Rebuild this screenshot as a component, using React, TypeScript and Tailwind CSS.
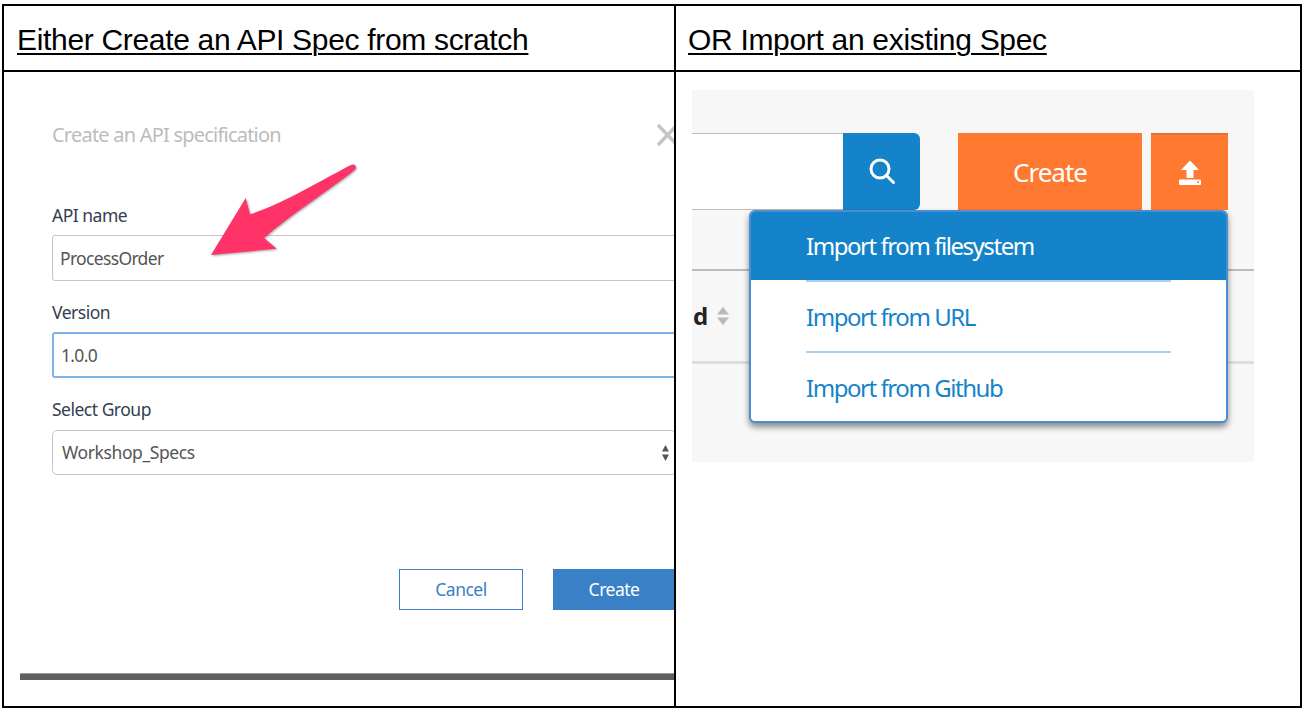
import React from "react";

const ui = { fontFamily: '"Noto Sans", "Open Sans", sans-serif' };
const head = { fontFamily: '"Liberation Sans", Arial, sans-serif' };

function Label({ children, className }: { children: React.ReactNode; className: string }) {
  return (
    <div className={`h-[24px] leading-[24px] text-[17.5px] tracking-[-0.5px] text-[#33404f] ${className}`}>{children}</div>
  );
}

export default function App() {
  return (
    <div className="w-[1304px] h-[710px] bg-white pt-[4px] pl-[2px] overflow-hidden">
      <div className="w-[1300px] h-[704px] border-2 border-black flex flex-col">
        <div className="h-[66px] shrink-0 flex border-b-2 border-black">
          <div
            style={head}
            className="w-[672px] border-r-2 border-black pl-[13px] pt-[16px] text-[30px] leading-[36px] tracking-[-0.32px] text-black underline underline-offset-[3px] decoration-2"
          >
            Either Create an API Spec from scratch
          </div>
          <div
            style={head}
            className="flex-1 pl-[12px] pt-[16px] text-[30px] leading-[36px] tracking-[-0.31px] text-black underline underline-offset-[3px] decoration-2"
          >
            OR Import an existing Spec
          </div>
        </div>
        <div className="flex flex-1 min-h-0">
          {/* Left panel */}
          <div style={ui} className="w-[672px] border-r-2 border-black relative overflow-hidden">
            <div className="pl-[48px] pt-[51px] flex flex-col items-start">
              <div className="h-[24px] w-[660px] flex items-center">
                <span className="w-[229px] shrink-0 whitespace-nowrap text-[20px] tracking-[-0.78px] text-[#bcbcbc] leading-[24px]">Create an API specification</span>
                <svg className="ml-[374px] shrink-0" width="24" height="24" viewBox="0 0 24 24">
                  <path d="M3 2 L22 22 M22 2 L3 22" stroke="#c4c4c4" strokeWidth="3.4" />
                </svg>
              </div>
              <Label className="mt-[56px]">API name</Label>
              <div className="mt-[8px] h-[46px] w-[640px] rounded-[3px] border-[1.5px] border-[#c6c6c6] pl-[7px] flex items-center text-[17.5px] tracking-[-0.67px] text-[#555]">
                ProcessOrder
              </div>
              <Label className="mt-[19px]">Version</Label>
              <div className="mt-[8px] h-[46px] w-[640px] rounded-[3px] border-2 border-[#7db3e6] pl-[7px] pt-[1px] flex items-center text-[17.5px] tracking-[-0.67px] text-[#555]">
                1.0.0
              </div>
              <Label className="mt-[19px]">Select Group</Label>
              <div className="mt-[9px] h-[45px] w-[624px] rounded-[5px] border-[1.5px] border-[#c6c6c6] pl-[9px] pr-[5px] flex items-center justify-between text-[17.5px] tracking-[-0.4px] text-[#555]">
                <span>Workshop_Specs</span>
                <svg width="9" height="18" viewBox="0 0 9 18">
                  <path d="M4.5 1 L8 7.5 H1 Z M4.5 17 L8 10.5 H1 Z" fill="#555" />
                </svg>
              </div>
              <div className="mt-[94px] ml-[347px] flex gap-[30px] h-[41px]">
                <div className="w-[124px] border-[1.5px] border-[#3a80c6] flex items-center justify-center text-[17.5px] tracking-[-0.5px] text-[#3a80c6]">
                  Cancel
                </div>
                <div className="w-[122px] bg-[#3a80c6] flex items-center justify-center text-[17.5px] tracking-[-0.5px] text-white">
                  Create
                </div>
              </div>
              <div className="mt-[63px] -ml-[32px] h-[7px] w-[680px] bg-[#5f5f5f] border-t border-[#9a9a9a]" />
            </div>
            <svg className="absolute left-0 top-0" width="400" height="220" viewBox="4 72 400 220">
              <path
                d="M211 255 L245.7 198 L250 214.3 C285 203 325 178 351 165 C355 163 357 167 355 169.5 C330 190 290 215 264 238 L276.7 248.7 Z"
                fill="#ff3368"
                style={{ filter: "drop-shadow(1px 1px 1px rgba(0,0,0,0.35))" }}
              />
            </svg>
          </div>

          {/* Right panel */}
          <div style={ui} className="flex-1 pl-[16px] pt-[18px]">
            <div className="w-[562px] h-[372px] bg-[#f7f7f7] relative pt-[43px]">
              <div className="flex h-[77px]">
                <div className="w-[151px] bg-white border-y-[1.5px] border-[#bdbdbd]" />
                <div className="w-[77px] bg-[#1583c9] rounded-r-[6px] flex items-center justify-center">
                  <svg width="28" height="28" viewBox="0 0 28 28" fill="none" stroke="#fff" strokeWidth="3" strokeLinecap="round">
                    <circle cx="12" cy="11" r="9" />
                    <path d="M18.5 17.5 L25.5 24.5" />
                  </svg>
                </div>
                <div className="ml-[38px] w-[184px] bg-[#ff7a30] pt-[2px] flex items-center justify-center text-white text-[26px] tracking-[-1px]">
                  Create
                </div>
                <div className="ml-[9px] w-[77px] bg-[#ff7a30] border-t-2 border-[#e8702e] flex items-center justify-center">
                  <svg width="24" height="26" viewBox="0 0 24 26">
                    <path d="M12 0.5 L21 10 H15.5 V18 H8.5 V10 H3 Z" fill="#fff" />
                    <rect x="1" y="19.5" width="22" height="5.5" rx="1" fill="#fff" />
                    <circle cx="20" cy="22.2" r="1" fill="#ff7a30" />
                  </svg>
                </div>
              </div>
              <div className="h-[61px] border-b-2 border-[#bcbcbc]" />
              <div className="h-[93px] border-b-[3px] border-[#dedede] flex items-center pl-[1px]">
                <span className="text-[24px] font-bold text-[#222] tracking-[-0.5px]">d</span>
                <svg className="ml-[8px]" width="14" height="20" viewBox="0 0 14 20">
                  <path d="M7 1 L13 8.5 H1 Z M7 19 L13 11.5 H1 Z" fill="#b9b9b9" />
                </svg>
              </div>

              <div className="absolute left-[57px] top-[120px] w-[479px] h-[213px] bg-white border-2 border-[#4a8dd0] rounded-[6px] overflow-hidden shadow-[0_4px_6px_rgba(0,0,0,0.45)] flex flex-col text-[#1583c9] text-[24px] tracking-[-1.45px]">
                <div className="h-[68px] shrink-0 bg-[#1583c9] text-white pl-[55px] flex items-center">Import from filesystem</div>
                <div className="h-[71px] shrink-0 pl-[55px] pt-[2px] flex items-center">Import from URL</div>
                <div className="h-[1.5px] w-[365px] ml-[55px] shrink-0 bg-[#a8d0ee]" />
                <div className="h-[69px] shrink-0 pl-[55px] pt-[1px] flex items-center">Import from Github</div>
                <div className="absolute left-[55px] top-[68px] h-[1.5px] w-[365px] bg-[#a8d0ee]" />
              </div>
            </div>
          </div>
        </div>
      </div>
    </div>
  );
}
